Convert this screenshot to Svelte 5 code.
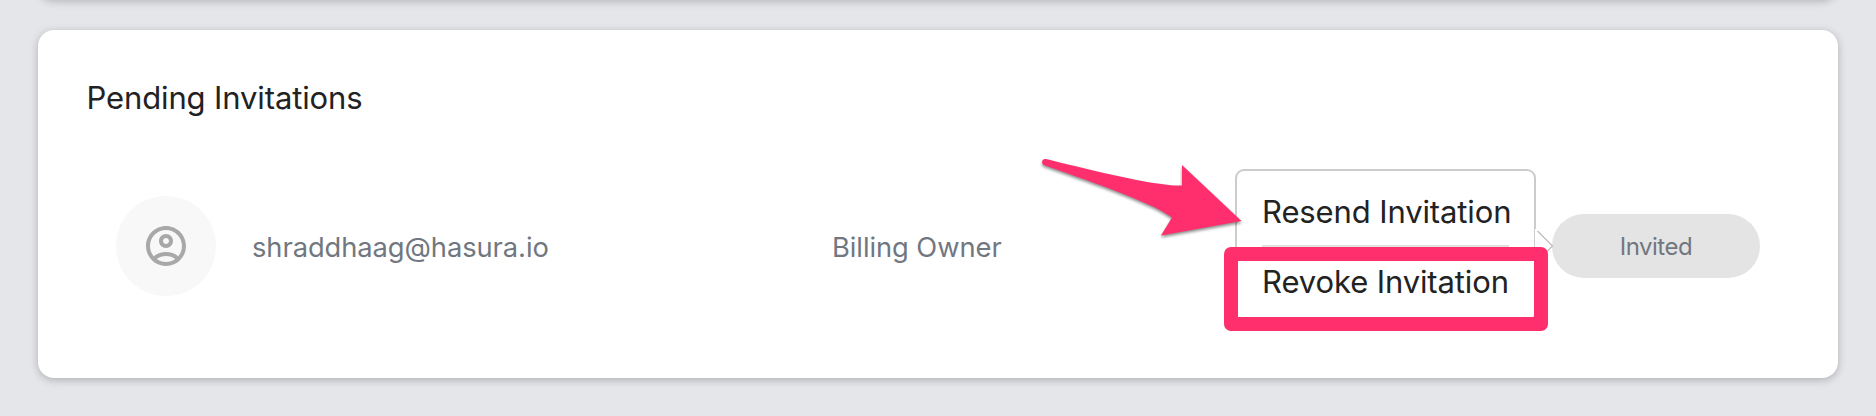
<script>
  const invitation = { email: 'shraddhaag@hasura.io', role: 'Billing Owner', status: 'Invited' };
</script>

<main>
  <section class="previous"></section>
  <section class="card">
    <h2><span>Pending Invitations</span></h2>
    <div class="row">
      <div class="avatar">
        <svg width="48" height="48" viewBox="0 0 24 24" fill="#a8a8a8">
          <path d="M12 2C6.48 2 2 6.48 2 12s4.48 10 10 10 10-4.48 10-10S17.52 2 12 2zM7.35 18.5C8.66 17.56 10.26 17 12 17s3.34.56 4.65 1.5C15.34 19.44 13.74 20 12 20s-3.34-.56-4.65-1.5zm10.79-1.38C16.45 15.8 14.32 15 12 15s-4.45.8-6.14 2.12C4.7 15.73 4 13.95 4 12c0-4.42 3.58-8 8-8s8 3.58 8 8c0 1.95-.7 3.73-1.86 5.12z" />
          <path d="M12 6c-1.93 0-3.5 1.57-3.5 3.5S10.07 13 12 13s3.5-1.57 3.5-3.5S13.93 6 12 6zm0 5c-.83 0-1.5-.67-1.5-1.5S11.17 8 12 8s1.5.67 1.5 1.5S12.83 11 12 11z" />
        </svg>
      </div>
      <div class="email"><span>{invitation.email}</span></div>
      <div class="role"><span>{invitation.role}</span></div>
      <div class="badge">
        <span>{invitation.status}</span>
        <div class="popover">
          <button class="resend">Resend Invitation</button>
          <hr />
          <button class="revoke">Revoke Invitation</button>
          <svg class="tip" width="19" height="34" viewBox="0 0 19 34">
            <path d="M0 0H1L18 17L1 34H0Z" fill="#fff" />
            <path d="M2.5 2L17.5 17L2.5 32" fill="none" stroke="#bdbdbd" stroke-width="1.3" />
          </svg>
        </div>
      </div>
    </div>
  </section>
  <svg class="pointer" width="220" height="90" viewBox="1030 150 220 90">
    <path d="M1046 159C1042 158 1040.500 163.500 1044 165C1082 179 1148 200 1172 217.500L1161 235.500L1241.500 221L1182 165V185.500C1157 187 1083 168 1046 159Z" fill="#ff2f6d" />
  </svg>
  <div class="highlight"></div>
</main>

<style>
  :global(body) { background: #e5e6ea; }
  main {
    position: relative;
    box-sizing: border-box;
    height: 416px;
    padding: 0 38px;
    overflow: hidden;
    font-family: Inter, "Liberation Sans", sans-serif;
    background: #e5e6ea;
  }
  .previous, .card {
    background: #fff;
    border-radius: 16px;
    box-shadow: 0 2px 8px rgba(0, 0, 0, 0.24);
  }
  .previous { height: 40px; margin-top: -41px; }
  .card {
    box-sizing: border-box;
    height: 348px;
    margin-top: 31px;
    padding: 49px 78px 0;
  }
  h2 {
    margin: 0 0 0 -29.5px;
    font-size: 31px;
    line-height: 38px;
    font-weight: 400;
    color: #222;
    letter-spacing: -0.12px;
  }
  .row {
    display: grid;
    grid-template-columns: 136px 580px 720px 208px;
    align-items: center;
    height: 100px;
    margin-top: 79px;
    font-size: 27.3px;
    color: #717780;
  }
  .email, .role { padding-top: 2px; letter-spacing: -0.06px; }
  .avatar {
    display: flex;
    align-items: center;
    justify-content: center;
    width: 100px;
    height: 100px;
    border-radius: 50%;
    background: #f8f8f8;
  }
  .badge {
    position: relative;
    display: flex;
    align-items: center;
    justify-content: center;
    height: 64px;
    border-radius: 32px;
    background: #e4e4e4;
    font-size: 24px;
    letter-spacing: -0.5px;
  }
  .popover {
    position: absolute;
    right: 224px;
    top: -45px;
    box-sizing: border-box;
    width: 301px;
    height: 154px;
    padding: 0 25px;
    border: 2px solid #ccc;
    border-radius: 9px;
    background: #fff;
  }
  button {
    display: block;
    width: 100%;
    height: 74px;
    padding: 7px 0 0;
    border: 0;
    background: none;
    font: 400 31px/38px Inter, "Liberation Sans", sans-serif;
    color: #222;
    white-space: nowrap;
    letter-spacing: -0.12px;
  }
  .revoke { padding: 0 0 5px; }
  hr { height: 2px; margin: 0; border: 0; background: #e1e1e1; }
  .tip { position: absolute; left: 298px; top: 58px; }
  .pointer {
    position: absolute;
    left: 1030px;
    top: 150px;
    filter: drop-shadow(0 2px 1.5px rgba(0, 0, 0, 0.45));
  }
  .highlight {
    position: absolute;
    left: 1224px;
    top: 247px;
    box-sizing: border-box;
    width: 324px;
    height: 83.500px;
    border: 14px solid #ff2f6d;
    border-radius: 7px;
  }
</style>
